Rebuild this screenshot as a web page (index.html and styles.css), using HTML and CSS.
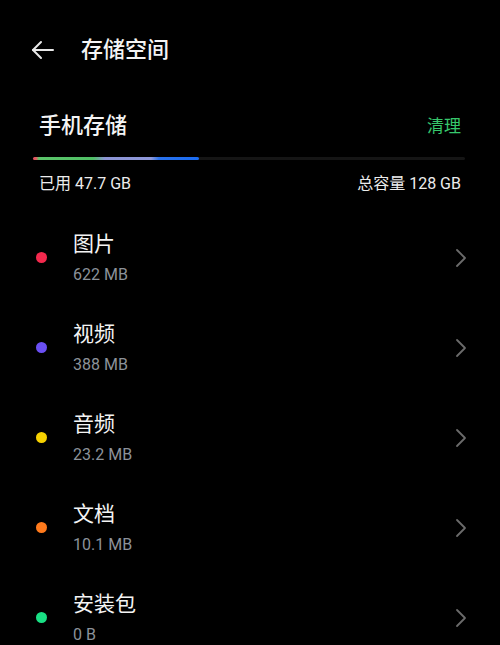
FILE: index.html
```html
<!DOCTYPE html>
<html lang="zh">
<head>
<meta charset="utf-8">
<link rel="stylesheet" href="styles.css">
</head>
<body>
<div class="page">
  <header class="header">
    <svg class="back" width="24" height="20" viewBox="0 0 24 20">
      <polyline points="10,2 2,10 10,18" fill="none" stroke="#e8e8e8" stroke-width="2" stroke-linecap="round" stroke-linejoin="round"/>
      <line x1="2" y1="10" x2="22" y2="10" stroke="#e8e8e8" stroke-width="2" stroke-linecap="round"/>
    </svg>
    <h1 class="title">存储空间</h1>
  </header>

  <section class="storage">
    <div class="storage-head">
      <span class="storage-name">手机存储</span>
      <span class="clean">清理</span>
    </div>
    <div class="bar"><div class="bar-fill"></div></div>
    <div class="stats">
      <span>已用 47.7 GB</span>
      <span>总容量 128 GB</span>
    </div>
  </section>

  <ul class="list">
    <li class="item"><span class="dot red"></span><div class="text"><div class="name">图片</div><div class="size">622 MB</div></div><svg class="chev" width="12" height="20" viewBox="0 0 12 20"><polyline points="2,2 10,10 2,18" fill="none" stroke="#6b6b6b" stroke-width="1.8" stroke-linecap="round" stroke-linejoin="round"/></svg></li>
    <li class="item"><span class="dot purple"></span><div class="text"><div class="name">视频</div><div class="size">388 MB</div></div><svg class="chev" width="12" height="20" viewBox="0 0 12 20"><polyline points="2,2 10,10 2,18" fill="none" stroke="#6b6b6b" stroke-width="1.8" stroke-linecap="round" stroke-linejoin="round"/></svg></li>
    <li class="item"><span class="dot yellow"></span><div class="text"><div class="name">音频</div><div class="size">23.2 MB</div></div><svg class="chev" width="12" height="20" viewBox="0 0 12 20"><polyline points="2,2 10,10 2,18" fill="none" stroke="#6b6b6b" stroke-width="1.8" stroke-linecap="round" stroke-linejoin="round"/></svg></li>
    <li class="item"><span class="dot orange"></span><div class="text"><div class="name">文档</div><div class="size">10.1 MB</div></div><svg class="chev" width="12" height="20" viewBox="0 0 12 20"><polyline points="2,2 10,10 2,18" fill="none" stroke="#6b6b6b" stroke-width="1.8" stroke-linecap="round" stroke-linejoin="round"/></svg></li>
    <li class="item"><span class="dot green"></span><div class="text"><div class="name">安装包</div><div class="size">0 B</div></div><svg class="chev" width="12" height="20" viewBox="0 0 12 20"><polyline points="2,2 10,10 2,18" fill="none" stroke="#6b6b6b" stroke-width="1.8" stroke-linecap="round" stroke-linejoin="round"/></svg></li>
  </ul>
</div>
</body>
</html>
```

FILE: styles.css
```css
html, body {
  margin: 0;
  padding: 0;
  background: #000;
}
body {
  font-family: "Roboto", "Noto Sans CJK SC", sans-serif;
  color: #f2f2f2;
  width: 500px;
  height: 645px;
  overflow: hidden;
}
.page {
  display: flex;
  flex-direction: column;
}
.header {
  height: 100px;
  display: flex;
  align-items: center;
  padding-left: 31px;
}
.back {
  display: block;
}
.title {
  margin: 0 0 0 26px;
  font-size: 22px;
  font-weight: 500;
  line-height: 30px;
  color: #f4f4f4;
}
.storage {
  padding: 0 35px 0 33px;
}
.storage-head {
  margin-top: 11px;
  height: 30px;
  display: flex;
  align-items: center;
  justify-content: space-between;
  padding: 0 4px 0 6px;
}
.storage-name {
  font-size: 22px;
  font-weight: 500;
  line-height: 30px;
  color: #f4f4f4;
}
.clean {
  font-size: 17px;
  line-height: 24px;
  color: #37c76c;
}
.bar {
  margin-top: 16px;
  height: 3px;
  background: #151515;
  border-radius: 2px;
}
.bar-fill {
  width: 166px;
  height: 3px;
  border-radius: 2px;
  background: linear-gradient(to right, #e04a5c 0px, #e35b62 3px, #5cc56a 6px, #4fbf65 60px, #8c94d4 72px, #8e98da 118px, #2a72ec 126px, #1a6cf2 166px);
}
.stats {
  margin-top: 14px;
  height: 20px;
  display: flex;
  justify-content: space-between;
  font-size: 16px;
  line-height: 20px;
  color: #ececec;
  padding: 0 4px 0 6px;
}
.list {
  list-style: none;
  margin: 18.5px 0 0;
  padding: 0;
}
.item {
  height: 90px;
  display: flex;
  align-items: center;
  padding: 0 33px 0 36px;
}
.dot {
  width: 11px;
  height: 11px;
  border-radius: 50%;
  flex: none;
}
.red { background: #f3294d; }
.purple { background: #6a4ff3; }
.yellow { background: #f6d100; }
.orange { background: #ff7a1c; }
.green { background: #19e084; }
.text {
  flex: 1;
  margin-left: 26px;
}
.name {
  font-size: 21px;
  line-height: 28px;
  color: #f4f4f4;
}
.size {
  margin-top: 7px;
  font-size: 16px;
  line-height: 20px;
  color: #8c929a;
}
.chev {
  display: block;
  flex: none;
}
```
